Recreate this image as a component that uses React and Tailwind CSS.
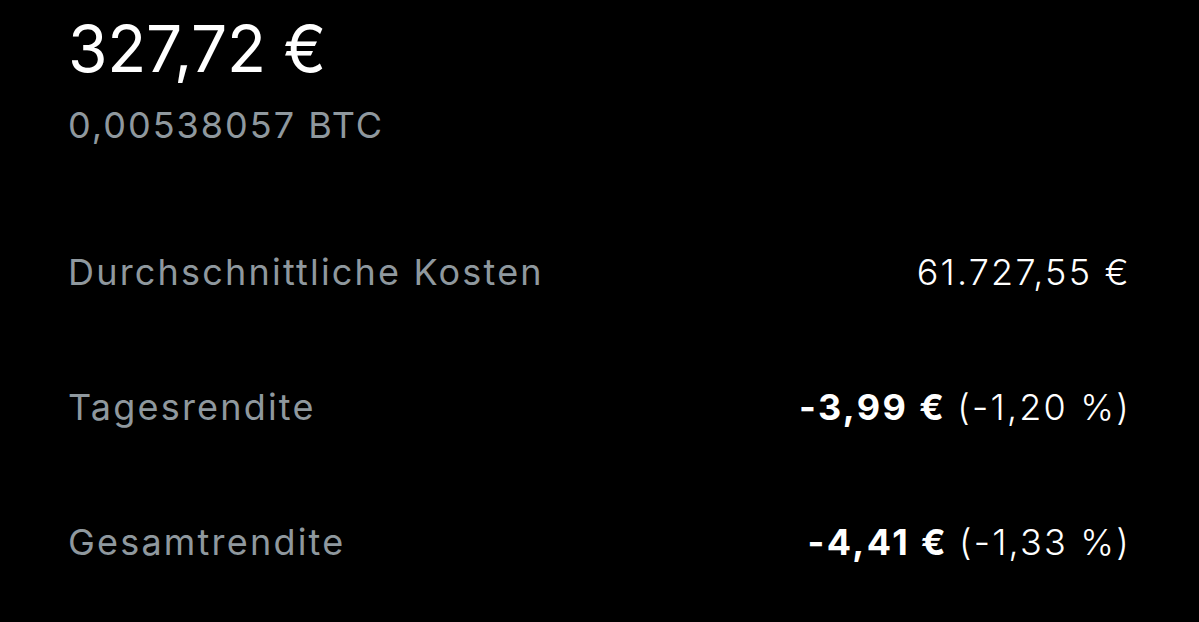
export default function App() {
  const rows = [
    { label: 'Durchschnittliche Kosten', bold: null, value: '61.727,55 €' },
    { label: 'Tagesrendite', bold: '-3,99 €', value: '(-1,20 %)' },
    { label: 'Gesamtrendite', bold: '-4,41 €', value: '(-1,33 %)' },
  ];

  return (
    <div className="w-[1199px] h-[622px] bg-black text-white overflow-hidden font-['Inter',sans-serif] pl-[68px] pr-[68px] pt-[17px]">
      <div className="text-[64px] leading-[64px] tracking-[-0.3px]">327,72 €</div>
      <div className="mt-[24px] text-[36px] leading-[40px] tracking-[2px] text-[#8f989e]">0,00538057 BTC</div>

      <div className="mt-[107px] flex flex-col gap-[95px]">
        {rows.map((r) => (
          <div key={r.label} className="flex justify-between text-[36px] leading-[40px] tracking-[2.2px]">
            <span className="text-[#8f989e]">{r.label}</span>
            <span className="font-light">
              {r.bold && <span className="font-bold tracking-[2.4px]">{r.bold} </span>}
              {r.value}
            </span>
          </div>
        ))}
      </div>
    </div>
  );
}
